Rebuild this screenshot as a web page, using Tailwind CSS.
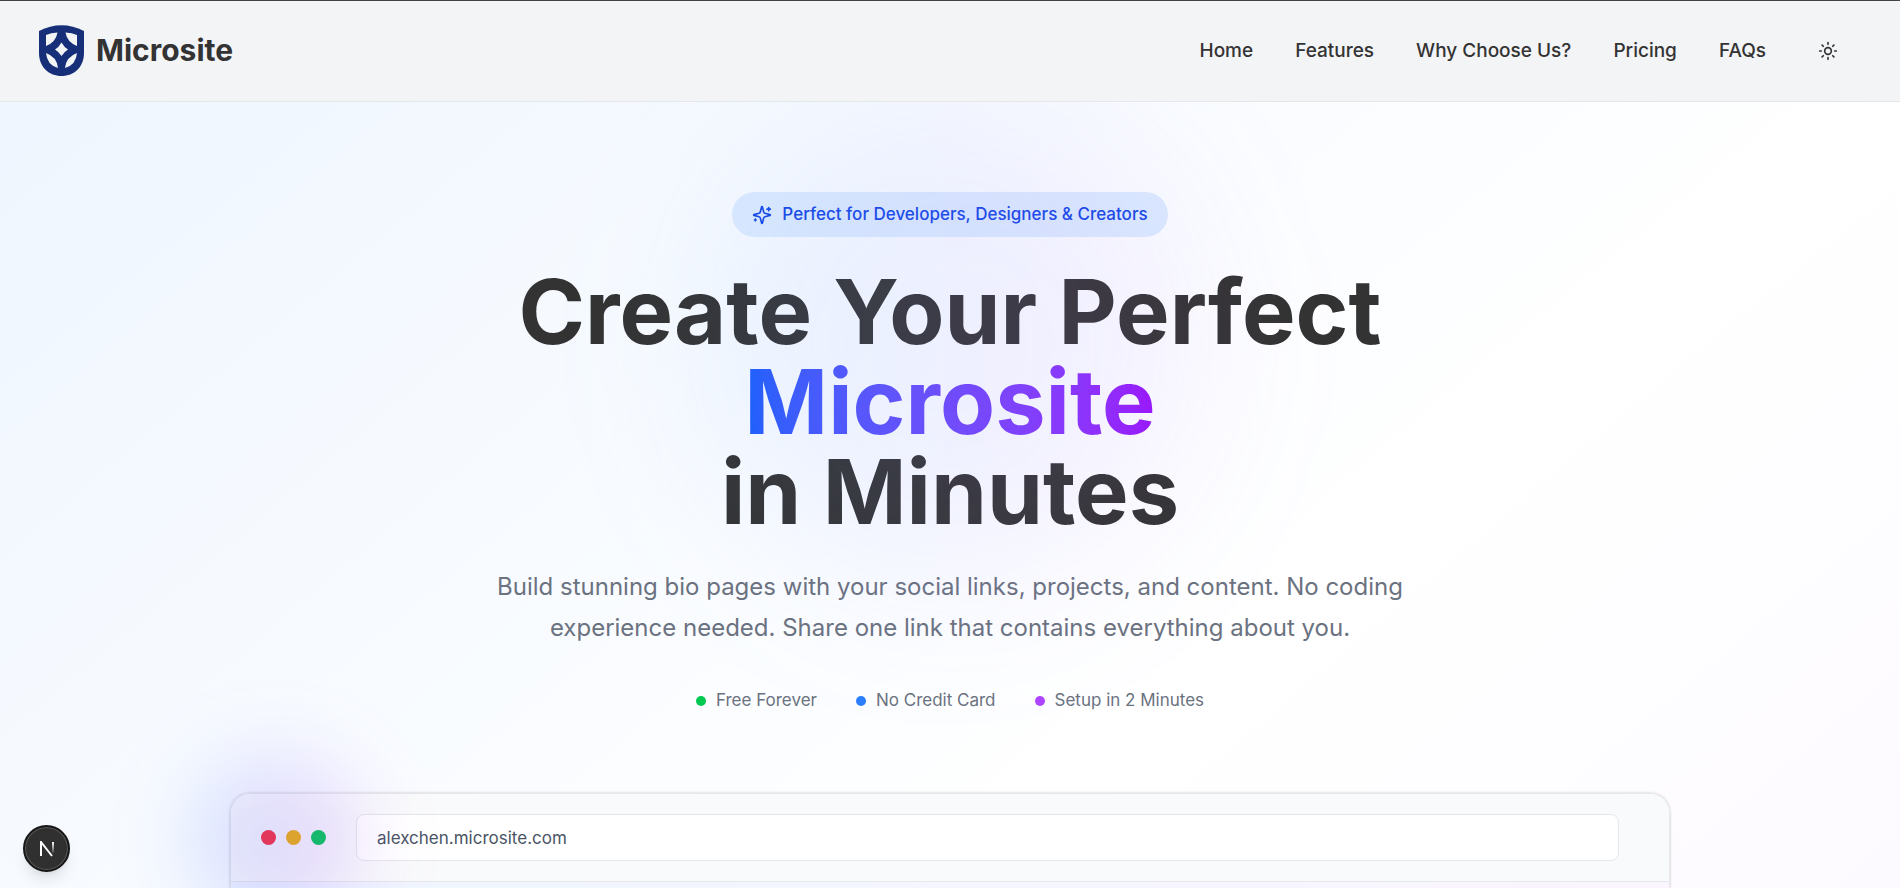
<!DOCTYPE html>
<html lang="en">
<head>
<meta charset="utf-8">
<meta name="viewport" content="width=device-width, initial-scale=1">
<title>Microsite</title>
<script src="https://cdn.jsdelivr.net/npm/@tailwindcss/browser@4"></script>
</head>
<body class="h-screen overflow-hidden bg-white pr-1 font-['Inter','Liberation_Sans',sans-serif] text-[#333333]">
<div class="relative flex h-full flex-col overflow-hidden border-t border-[#45424a]">
  <header class="relative z-10 flex h-[101px] shrink-0 items-center justify-between border-b border-gray-200 bg-gray-100 px-[39px]">
    <a href="#" class="flex items-center gap-3 pb-0.5 text-[30px] font-bold leading-9">
      <svg class="h-[51px] w-[45px]" viewBox="0 0 45 51" aria-hidden="true">
        <path fill="#172f78" d="M0 6Q22.500 -5.500 45 6V28C45 42 35 51 22.500 51S0 42 0 28Z"/>
        <path fill="#f3f4f6" d="M7 10Q12 7.800 18.500 7.500Q17 17 7 21ZM38 10Q33 7.800 26.500 7.500Q28 17 38 21ZM22.500 17.500Q25 22 29 24.500Q25 27 22.500 31Q20 27 16 24.500Q20 22 22.500 17.500ZM7 28Q18 32 19 43Q8 40 7 28ZM38 28Q27 32 26 43Q37 40 38 28Z"/>
      </svg>
      <span>Microsite</span>
    </a>
    <nav class="flex items-center gap-[42px] pr-[23px] text-[19px] font-medium leading-[30px]">
      <a href="#">Home</a>
      <a href="#">Features</a>
      <a href="#">Why Choose Us?</a>
      <a href="#">Pricing</a>
      <a href="#">FAQs</a>
      <button type="button" aria-label="Toggle theme" class="ml-[10px] flex h-11 w-5 items-center justify-center">
        <svg class="size-5 shrink-0" viewBox="0 0 24 24" fill="none" stroke="currentColor" stroke-width="2" stroke-linecap="round" aria-hidden="true"><circle cx="12" cy="12" r="4"/><path d="M12 2v2M12 20v2M4.930 4.930l1.410 1.410M17.660 17.660l1.410 1.410M2 12h2M20 12h2M6.340 17.660l-1.410 1.410M19.070 4.930l-1.410 1.410"/></svg>
      </button>
    </nav>
  </header>

  <main class="relative flex min-h-0 flex-1 flex-col items-center overflow-hidden px-8 pt-[90px]">
    <div class="pointer-events-none absolute inset-x-0 top-0 -z-10 h-[1600px] bg-linear-to-br from-blue-50 via-white to-purple-50"></div>
    <div class="flex h-[45px] shrink-0 items-center gap-[10px] rounded-full bg-blue-100 px-5 text-[17px] font-medium text-blue-700">
      <svg class="size-5" viewBox="0 0 24 24" fill="none" stroke="currentColor" stroke-width="2" stroke-linecap="round" stroke-linejoin="round" aria-hidden="true"><path d="M9.937 15.500A2 2 0 0 0 8.500 14.063l-6.135-1.582a.5.5 0 0 1 0-.962L8.500 9.936A2 2 0 0 0 9.937 8.500l1.582-6.135a.5.5 0 0 1 .963 0L14.063 8.500A2 2 0 0 0 15.500 9.937l6.135 1.581a.5.5 0 0 1 0 .964L15.500 14.063a2 2 0 0 0-1.437 1.437l-1.582 6.135a.5.5 0 0 1-.963 0z"/><path d="M20 3v4M22 5h-4M4 17v2M5 18H3"/></svg>
      <span>Perfect for Developers, Designers &amp; Creators</span>
    </div>
    <h1 class="mt-[30px] flex flex-col items-center text-center text-[90px] font-bold leading-[90px]">
      <span>Create Your Perfect</span>
      <span class="bg-linear-to-r from-blue-600 to-purple-600 bg-clip-text text-transparent">Microsite</span>
      <span>in Minutes</span>
    </h1>
    <p class="mt-[29px] max-w-[960px] text-center text-[24px] leading-[41px] text-[#6b7280]">Build stunning bio pages with your social links, projects, and content. No coding experience needed. Share one link that contains everything about you.</p>
    <ul class="mt-10 flex items-center gap-[39px] text-[17px] leading-[25px] text-[#6b7280]">
      <li class="flex items-center gap-[10px]"><span class="size-[10px] rounded-full bg-green-500"></span>Free Forever</li>
      <li class="flex items-center gap-[10px]"><span class="size-[10px] rounded-full bg-blue-500"></span>No Credit Card</li>
      <li class="flex items-center gap-[10px]"><span class="size-[10px] rounded-full bg-purple-500"></span>Setup in 2 Minutes</li>
    </ul>
    <section aria-label="Preview" class="mt-20 flex min-h-0 w-full max-w-[1440px] flex-1 flex-col rounded-t-[20px] border border-b-0 border-gray-200 shadow-[0_0_3px_rgb(0_0_0/0.2)]">
      <div class="flex shrink-0 items-center rounded-t-[19px] border-b border-gray-200 bg-gray-50 py-5 pl-[30px] pr-[50px]">
        <div class="flex gap-[10px]">
          <span class="size-[15px] rounded-full bg-red-500"></span>
          <span class="size-[15px] rounded-full bg-yellow-500"></span>
          <span class="size-[15px] rounded-full bg-green-500"></span>
        </div>
        <input type="text" aria-label="Site address" value="alexchen.microsite.com" class="ml-[30px] h-[47px] min-w-0 flex-1 rounded-lg border border-gray-200 bg-white px-5 text-[17px] text-gray-600">
      </div>
      <div class="min-h-0 flex-1 bg-linear-to-r from-blue-50 to-purple-50"></div>
    </section>
    <div class="pointer-events-none absolute left-1/2 top-0 size-[480px] -translate-x-1/2 rounded-full bg-linear-to-r from-blue-400/10 to-purple-400/10 blur-[80px]"></div>
    <div class="pointer-events-none absolute left-[190px] top-[655px] size-[170px] rounded-full bg-linear-to-r from-blue-500/20 to-purple-500/20 blur-[40px]"></div>
  </main>
  <button type="button" aria-label="Open Next.js Dev Tools" class="absolute bottom-4 left-[23px] flex size-[47px] items-center justify-center rounded-full border-2 border-[#171717] bg-[#303030] shadow-lg ring-1 ring-inset ring-[#5a5a5a]">
    <svg class="size-4 shrink-0" viewBox="0 0 16 16" fill="none" stroke-width="2" aria-hidden="true">
      <defs><linearGradient id="fade" x1="0" y1="0" x2="0" y2="1"><stop stop-color="#fff"/><stop offset="1" stop-color="#fff" stop-opacity=".1"/></linearGradient></defs>
      <path stroke="#fff" d="M2 15V1L13 15"/><path fill="url(#fade)" d="M13 1h2v11h-2z"/>
    </svg>
  </button>
</div>
</body>
</html>
